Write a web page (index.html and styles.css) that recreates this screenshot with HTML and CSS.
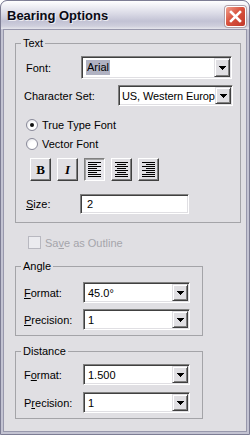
FILE: index.html
```html
<!DOCTYPE html>
<html lang="en">

<head>
    <meta charset="UTF-8">
    <title>Bearing Options</title>
    <link rel="stylesheet" href="styles.css">
</head>

<body>
    <div class="window">
        <div class="titlebar">
            <span class="title">Bearing Options</span>
            <span class="close">
                <svg width="21" height="21" viewBox="0 0 21 21">
                    <path d="M6 6L15 15M15 6L6 15" stroke="#fff" stroke-width="2.6" stroke-linecap="square"/>
                </svg>
            </span>
        </div>
        <div class="client">
            <fieldset class="group group-text">
                <legend>Text</legend>
                <div class="row row-font">
                    <span class="lbl lbl-font">Font:</span>
                    <div class="combo combo-font">
                        <span class="value"><span class="sel">Arial</span></span>
                        <span class="drop"><svg width="7" height="4"><path d="M0 0h7v1H0zM1 1h5v1H1zM2 2h3v1H2zM3 3h1v1H3z"/></svg></span>
                    </div>
                </div>
                <div class="row row-charset">
                    <span class="lbl">Character Set:</span>
                    <div class="combo combo-charset">
                        <span class="value">US, Western Europ</span>
                        <span class="drop"><svg width="7" height="4"><path d="M0 0h7v1H0zM1 1h5v1H1zM2 2h3v1H2zM3 3h1v1H3z"/></svg></span>
                    </div>
                </div>
                <div class="row row-radio first">
                    <span class="radio checked"></span>
                    <span>True Type Font</span>
                </div>
                <div class="row row-radio">
                    <span class="radio"></span>
                    <span>Vector Font</span>
                </div>
                <div class="row row-tools">
                    <span class="tb"><span class="glyph-b">B</span></span>
                    <span class="tb"><span class="glyph-i">I</span></span>
                    <span class="tb pressed">
                        <svg width="13" height="15"><path d="M0 0h13v1H0zM0 2h9v1H0zM0 4h13v1H0zM0 6h9v1H0zM0 8h13v1H0zM0 10h9v1H0zM0 12h13v1H0zM0 14h13v1H0z"/></svg>
                    </span>
                    <span class="tb">
                        <svg width="13" height="15"><path d="M0 0h13v1H0zM2 2h9v1H2zM0 4h13v1H0zM2 6h9v1H2zM0 8h13v1H0zM2 10h9v1H2zM0 12h13v1H0zM0 14h13v1H0z"/></svg>
                    </span>
                    <span class="tb">
                        <svg width="13" height="15"><path d="M0 0h13v1H0zM4 2h9v1H4zM0 4h13v1H0zM4 6h9v1H4zM0 8h13v1H0zM4 10h9v1H4zM0 12h13v1H0zM0 14h13v1H0z"/></svg>
                    </span>
                </div>
                <div class="row row-size">
                    <span class="lbl lbl-size"><u>S</u>ize:</span>
                    <div class="edit">2</div>
                </div>
            </fieldset>

            <div class="row row-check">
                <span class="check"></span>
                <span class="disabled">Sa<u>v</u>e as Outline</span>
            </div>

            <fieldset class="group group-small">
                <legend>Angle</legend>
                <div class="row row-field first">
                    <span class="lbl lbl-field"><u>F</u>ormat:</span>
                    <div class="combo combo-field">
                        <span class="value">45.0°</span>
                        <span class="drop"><svg width="7" height="4"><path d="M0 0h7v1H0zM1 1h5v1H1zM2 2h3v1H2zM3 3h1v1H3z"/></svg></span>
                    </div>
                </div>
                <div class="row row-field">
                    <span class="lbl lbl-field"><u>P</u>recision:</span>
                    <div class="combo combo-field">
                        <span class="value">1</span>
                        <span class="drop"><svg width="7" height="4"><path d="M0 0h7v1H0zM1 1h5v1H1zM2 2h3v1H2zM3 3h1v1H3z"/></svg></span>
                    </div>
                </div>
            </fieldset>

            <fieldset class="group group-small group-distance">
                <legend>Distance</legend>
                <div class="row row-field first">
                    <span class="lbl lbl-field">F<u>o</u>rmat:</span>
                    <div class="combo combo-field">
                        <span class="value">1.500</span>
                        <span class="drop"><svg width="7" height="4"><path d="M0 0h7v1H0zM1 1h5v1H1zM2 2h3v1H2zM3 3h1v1H3z"/></svg></span>
                    </div>
                </div>
                <div class="row row-field">
                    <span class="lbl lbl-field">P<u>r</u>ecision:</span>
                    <div class="combo combo-field">
                        <span class="value">1</span>
                        <span class="drop"><svg width="7" height="4"><path d="M0 0h7v1H0zM1 1h5v1H1zM2 2h3v1H2zM3 3h1v1H3z"/></svg></span>
                    </div>
                </div>
            </fieldset>
        </div>
    </div>
</body>

</html>
```

FILE: styles.css
```css
* {
    box-sizing: border-box;
}

body {
    margin: 0;
    font-family: "Liberation Sans", Arial, sans-serif;
    font-size: 11px;
    color: #000;
}

.window {
    width: 250px;
    height: 435px;
    display: flex;
    flex-direction: column;
    background: #c3c3d2;
    border: 1px solid #7d7d94;
    border-radius: 7px 7px 0 0;
    padding: 0 2px 2px;
    overflow: hidden;
}

.titlebar {
    height: 28px;
    margin: 0 -2px;
    display: flex;
    align-items: center;
    padding: 0 3px 0 6px;
    background: linear-gradient(#ffffff 0%, #f0f0f5 18%, #dadae6 45%, #c2c2d4 72%, #cfcfdc 90%, #e6e6ec 100%);
    border-radius: 6px 6px 0 0;
}

.title {
    flex: 1;
    font-weight: bold;
    font-size: 13px;
    color: #0a0a14;
    text-shadow: 1px 1px 0 rgba(255, 255, 255, 0.7);
}

.close {
    width: 21px;
    height: 21px;
    margin-top: 2px;
    border: 1px solid #fff;
    border-radius: 3px;
    background: linear-gradient(135deg, #f0a08e, #d9533f 45%, #c0392b);
    box-shadow: 0 0 0 1px #b0a0a8;
    display: flex;
    align-items: center;
    justify-content: center;
}

.close svg {
    margin: -1px;
}

.client {
    flex: 1;
    background: #e0dfe3;
    border: 1px solid #9898ac;
}

.group {
    margin: 7px 5px 0 11px;
    padding: 0 0 8px 0;
    border: 1px solid #a4a4a8;
    min-width: 0;
}

.group legend {
    margin-left: 5px;
    padding: 0 2px;
    line-height: 13px;
}

.row {
    display: flex;
    align-items: center;
}

.row-font {
    margin-top: 6px;
    height: 23px;
    padding-left: 10px;
}

.lbl-font {
    width: 55px;
}

.row-charset {
    margin-top: 6px;
    height: 21px;
    padding-left: 8px;
    justify-content: space-between;
    padding-right: 7px;
}

.combo {
    display: flex;
    height: 100%;
    background: #fff;
    border: 1px solid;
    border-color: #808080 #fff #fff #808080;
    box-shadow: inset 1px 1px #404040, inset -1px -1px #e0dfe3;
    padding: 1px;
}

.combo .value {
    flex: 1;
    min-width: 0;
    padding-left: 3px;
    display: flex;
    align-items: center;
    overflow: hidden;
    white-space: nowrap;
}

.combo-font {
    width: 151px;
}

.combo-charset {
    width: 115px;
}

.combo-charset .value {
    padding-left: 2px;
    letter-spacing: -0.1px;
}

.sel {
    background: #b0b2c2;
    padding: 1px 1px 2px 1px;
}

.drop {
    width: 16px;
    flex: none;
    background: #e0dfe3;
    border: 1px solid;
    border-color: #e0dfe3 #404040 #404040 #e0dfe3;
    box-shadow: inset 1px 1px #fff, inset -1px -1px #808080;
    display: flex;
    align-items: center;
    justify-content: center;
}

.row-radio {
    height: 19px;
    padding-left: 10px;
    gap: 4px;
}

.row-radio.first {
    margin-top: 9px;
}

.radio {
    width: 12px;
    height: 12px;
    border-radius: 50%;
    border: 1px solid #8a8a9a;
    background: radial-gradient(circle at 65% 65%, #ffffff 40%, #dcdce2 100%);
    display: flex;
    align-items: center;
    justify-content: center;
}

.radio.checked::after {
    content: "";
    width: 4px;
    height: 4px;
    border-radius: 50%;
    background: #111;
}

.row-tools {
    margin-top: 5px;
    padding-left: 14px;
    gap: 6px;
}

.tb {
    width: 21px;
    height: 23px;
    border: 1px solid;
    border-color: #fff #404040 #404040 #fff;
    box-shadow: inset -1px -1px #808080;
    display: flex;
    align-items: center;
    justify-content: center;
}

.tb.pressed {
    border-color: #808080 #fff #fff #808080;
    box-shadow: inset 1px 1px #a0a0a0;
    background: #e6e5ea;
}

.glyph-b {
    font-family: "Liberation Serif", serif;
    font-weight: bold;
    font-size: 13px;
}

.glyph-i {
    font-family: "Liberation Serif", serif;
    font-weight: bold;
    font-style: italic;
    font-size: 13px;
}

.row-size {
    margin-top: 13px;
    height: 20px;
    padding-left: 10px;
}

.lbl-size {
    width: 54px;
}

.edit {
    width: 109px;
    height: 100%;
    background: #fff;
    border: 1px solid;
    border-color: #808080 #fff #fff #808080;
    box-shadow: inset 1px 1px #404040, inset -1px -1px #e0dfe3;
    padding-left: 6px;
    display: flex;
    align-items: center;
}

.row-check {
    margin-top: 13px;
    height: 13px;
    padding-left: 24px;
    gap: 4px;
}

.check {
    width: 13px;
    height: 13px;
    border: 1px solid #b8b8c0;
    background: #ebebef;
}

.disabled {
    color: #a5a5ab;
}

.group-small {
    width: 188px;
    margin-top: 11px;
    padding-bottom: 5px;
}

.group-distance {
    margin-top: 9px;
}

.row-field {
    margin-top: 6px;
    height: 21px;
    padding-left: 8px;
}

.group-small .row-field.first {
    margin-top: 9px;
}

.group-distance .row-field.first {
    margin-top: 6px;
}

.group-distance .row-field:not(.first) {
    margin-top: 7px;
}

.lbl-field {
    width: 59px;
}

.combo-field {
    width: 107px;
}
```
